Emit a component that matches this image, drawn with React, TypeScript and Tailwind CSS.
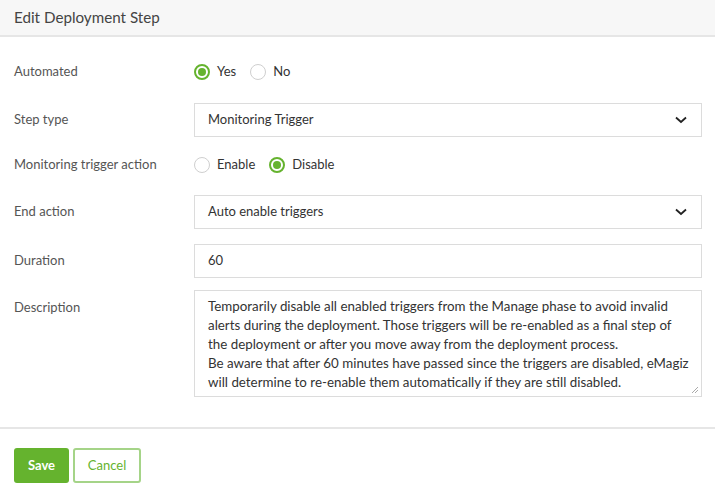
import React from "react";

const Radio = ({ checked, label }: { checked: boolean; label: string }) => (
  <label className="flex items-center gap-[7px]">
    <span
      className={
        checked
          ? "flex h-[16px] w-[16px] items-center justify-center rounded-full border-2 border-[#65b32e] bg-white"
          : "flex h-[16px] w-[16px] items-center justify-center rounded-full border border-[#cfcfcf] bg-white"
      }
    >
      {checked && <span className="h-[8px] w-[8px] rounded-full bg-[#65b32e]" />}
    </span>
    <span className="text-[13px] text-[#333]">{label}</span>
  </label>
);

const Chevron = () => (
  <svg width="12" height="8" viewBox="0 0 12 8" className="shrink-0">
    <path d="M1 1.5 L6 6 L11 1.5" fill="none" stroke="#222" strokeWidth="1.8" />
  </svg>
);

const Select = ({ value }: { value: string }) => (
  <div className="flex h-[34px] items-center justify-between border border-[#dcdcdc] bg-white pl-[13px] pr-[14px] text-[13px] text-[#333]">
    <span>{value}</span>
    <Chevron />
  </div>
);

export default function App() {
  return (
    <div
      className="h-[487px] w-[715px] bg-white text-[#555]"
      style={{ fontFamily: "Lato, 'Open Sans', sans-serif" }}
    >
      <div className="flex h-[37px] items-center border-b-2 border-[#e6e6e6] bg-[#f7f7f7] pl-[14px] text-[15.2px] text-[#444]">
        Edit Deployment Step
      </div>
      <div className="px-[14px] pr-[13px] pt-[18px]">
        <div className="grid grid-cols-[180px_1fr] items-center">
          <div className="h-[34px] flex items-center text-[13px]">Automated</div>
          <div className="flex h-[34px] items-center gap-[14px]">
            <Radio checked label="Yes" />
            <Radio checked={false} label="No" />
          </div>
        </div>
        <div className="mt-[14px] grid grid-cols-[180px_1fr] items-center">
          <div className="text-[13px]">Step type</div>
          <Select value="Monitoring Trigger" />
        </div>
        <div className="mt-[11px] grid grid-cols-[180px_1fr] items-center">
          <div className="h-[34px] flex items-center text-[13px]">Monitoring trigger action</div>
          <div className="flex h-[34px] items-center gap-[14px]">
            <Radio checked={false} label="Enable" />
            <Radio checked label="Disable" />
          </div>
        </div>
        <div className="mt-[13px] grid grid-cols-[180px_1fr] items-center">
          <div className="text-[13px]">End action</div>
          <Select value="Auto enable triggers" />
        </div>
        <div className="mt-[15px] grid grid-cols-[180px_1fr] items-center">
          <div className="text-[13px]">Duration</div>
          <div className="flex h-[34px] items-center border border-[#dcdcdc] bg-white pl-[13px] text-[13px] text-[#333]">
            60
          </div>
        </div>
        <div className="mt-[12px] grid grid-cols-[180px_1fr] items-start">
          <div className="pt-[8px] text-[13px]">Description</div>
          <div className="relative h-[107px] border border-[#dcdcdc] bg-white pl-[13px] pr-[8px] pt-[6px] text-[13.35px] leading-[19px] text-[#333]">
            Temporarily disable all enabled triggers from the Manage phase to avoid invalid alerts during the deployment. Those triggers will be re-enabled as a final step of the deployment or after you move away from the deployment process.
            <br />
            Be aware that after 60 minutes have passed since the triggers are disabled, eMagiz will determine to re-enable them automatically if they are still disabled.
            <svg width="8" height="8" viewBox="0 0 8 8" className="absolute bottom-[2px] right-[2px]">
              <path d="M1 7 L7 1 M4 7 L7 4" stroke="#aaa" strokeWidth="1" />
            </svg>
          </div>
        </div>
      </div>
      <div className="mt-[30px] border-t-2 border-[#e6e6e6] px-[14px] pt-[19px]">
        <div className="flex gap-[4px]">
          <button className="h-[35px] w-[55px] rounded-[3px] bg-[#65b32e] text-[13px] font-bold text-white">
            Save
          </button>
          <button className="h-[35px] w-[68px] rounded-[3px] border-2 border-[#a5d488] bg-white text-[13px] text-[#65b32e]">
            Cancel
          </button>
        </div>
      </div>
    </div>
  );
}
